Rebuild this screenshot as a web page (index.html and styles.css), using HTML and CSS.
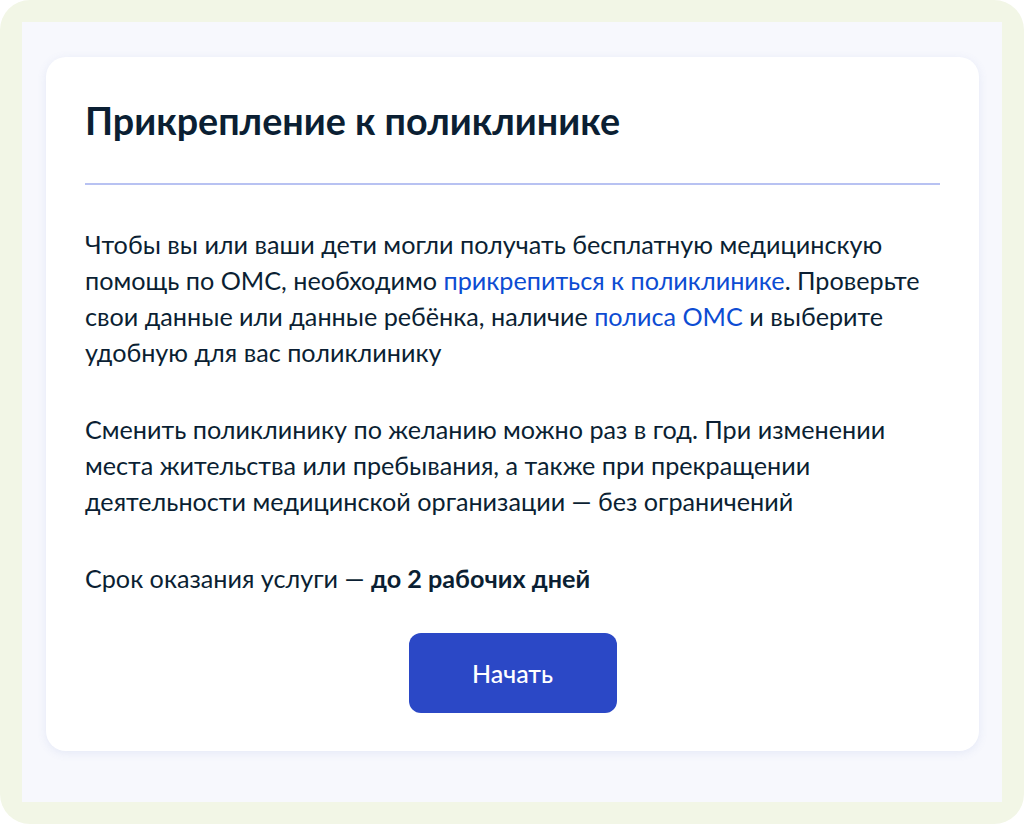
FILE: index.html
```html
<!DOCTYPE html>
<html lang="ru">
<head>
<meta charset="utf-8">
<title>Прикрепление к поликлинике</title>
<link rel="stylesheet" href="styles.css">
</head>
<body>
<div class="frame">
  <div class="panel">
    <section class="card">
      <h1 class="title">Прикрепление к поликлинике</h1>
      <hr class="divider">
      <p class="text">Чтобы вы или ваши дети могли получать бесплатную медицинскую помощь по ОМС, необходимо <a class="link" href="#">прикрепиться к поликлинике</a>. Проверьте свои данные или данные ребёнка, наличие <a class="link" href="#">полиса ОМС</a> и выберите удобную для вас поликлинику</p>
      <p class="text">Сменить поликлинику по желанию можно раз в год. При изменении места жительства или пребывания, а также при прекращении деятельности медицинской организации — без ограничений</p>
      <p class="text">Срок оказания услуги — <b>до 2 рабочих дней</b></p>
      <div class="actions">
        <button class="btn" type="button">Начать</button>
      </div>
    </section>
  </div>
</div>
</body>
</html>
```
FILE: styles.css
```css
html, body {
  margin: 0;
  padding: 0;
  background: #ffffff;
}

body {
  font-family: Lato, "Noto Sans", sans-serif;
  color: #0b1f33;
}

/* outer tinted frame with rounded corners */
.frame {
  width: 1024px;
  height: 824px;
  box-sizing: border-box;
  padding: 22px;
  background: #f2f6e6;
  border-radius: 30px;
}

.panel {
  height: 100%;
  box-sizing: border-box;
  background: #f7f8fd;
  padding: 35px 23px 0 24px;
}

.card {
  background: #ffffff;
  border-radius: 20px;
  box-shadow: 0 2px 10px rgba(100, 120, 200, 0.12);
  padding: 42px 39px 38px 39px;
}

.title {
  margin: 0;
  font-size: 37.7px;
  line-height: 44px;
  font-weight: 700;
  color: #0b1f33;
}

.divider {
  border: 0;
  height: 2px;
  background: #b8c2f2;
  margin: 40px 0 0 0;
}

.text {
  margin: 41px 0 0 0;
  font-size: 25.2px;
  line-height: 36px;
}

.text + .text {
  margin-top: 41px;
}

.link {
  color: #0d4cd3;
  text-decoration: none;
}

.actions {
  display: flex;
  justify-content: center;
  margin-top: 37px;
}

.btn {
  width: 208px;
  height: 80px;
  border: 0;
  border-radius: 12px;
  background: #2b48c6;
  color: #ffffff;
  font-family: Lato, "Noto Sans", sans-serif;
  font-size: 25px;
  font-weight: 500;
}
```
